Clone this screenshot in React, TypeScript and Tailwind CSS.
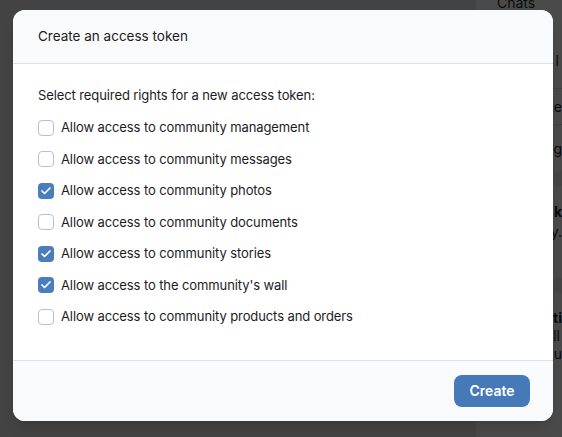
import { Check } from 'lucide-react';

const RIGHTS = [
  { label: 'Allow access to community management', checked: false },
  { label: 'Allow access to community messages', checked: false },
  { label: 'Allow access to community photos', checked: true },
  { label: 'Allow access to community documents', checked: false },
  { label: 'Allow access to community stories', checked: true },
  { label: "Allow access to the community's wall", checked: true },
  { label: 'Allow access to community products and orders', checked: false },
];

function Backdrop() {
  return (
    <div className="flex h-[437px] w-[562px] overflow-hidden bg-[#434343]">
      <div className="flex-1" />
      <div className="flex w-[86px] shrink-0 flex-col bg-[#4a4a4a] text-right text-[14px] text-[#0a0a0a]">
        <div className="-mt-[6px] h-[38px] pl-[21px] text-left leading-[18px]">Chats</div>
        <div className="flex h-[57px] items-center justify-end border-b border-[#404040] pr-[3px]">l</div>
        <div className="flex h-[36px] items-center justify-end border-b border-[#404040]">ge</div>
        <div className="flex h-[46px] items-center justify-end">eg</div>
        <div className="h-[15px] bg-[#454545]" />
        <div className="flex flex-col items-end pt-[16px] leading-[20px]">
          <span className="font-bold">k</span>
          <span>y.</span>
        </div>
        <div className="mt-[36px] h-[15px] bg-[#454545]" />
        <div className="flex flex-col items-end pt-[16px] leading-[18px]">
          <span className="font-bold">ti</span>
          <span className="pr-[2px]">ll</span>
          <span>nu</span>
        </div>
      </div>
    </div>
  );
}

function Box({ checked }: { checked: boolean }) {
  if (checked) {
    return (
      <span className="flex h-[16px] w-[16px] shrink-0 items-center justify-center rounded-[4px] bg-[#4a7dbc]">
        <Check className="h-[12px] w-[12px] text-white" strokeWidth={3.5} />
      </span>
    );
  }
  return <span className="h-[16px] w-[16px] shrink-0 rounded-[4px] border border-[#b9c0cb] bg-white" />;
}

export default function App() {
  return (
    <div className="relative h-[437px] w-[562px] overflow-hidden font-['Inter','Liberation_Sans',sans-serif]">
      <Backdrop />
      <div className="absolute left-[13px] top-[10px] w-[540px] overflow-hidden rounded-[12px] bg-white shadow-lg">
        <div className="flex h-[54px] items-center border-b border-[#dde2e9] bg-[#f9fafc] px-[25px] text-[13.5px] text-[#1c1c1e]">
          Create an access token
        </div>
        <div className="px-[25px] pt-[22px] pb-[27px] text-[13px] tracking-[-0.1px] text-[#1c1c1e]">
          <p className="leading-[18px]">Select required rights for a new access token:</p>
          <ul className="mt-[8px] flex flex-col">
            {RIGHTS.map((r) => (
              <li key={r.label} className="flex h-[31.5px] items-center gap-[7px]">
                <Box checked={r.checked} />
                <span>{r.label}</span>
              </li>
            ))}
          </ul>
        </div>
        <div className="flex h-[61px] items-center justify-end border-t border-[#dde2e9] bg-[#f9fafc] px-[23px]">
          <button className="h-[32px] w-[76px] rounded-[8px] bg-[#4679b8] text-[14px] font-semibold text-white">
            Create
          </button>
        </div>
      </div>
    </div>
  );
}
